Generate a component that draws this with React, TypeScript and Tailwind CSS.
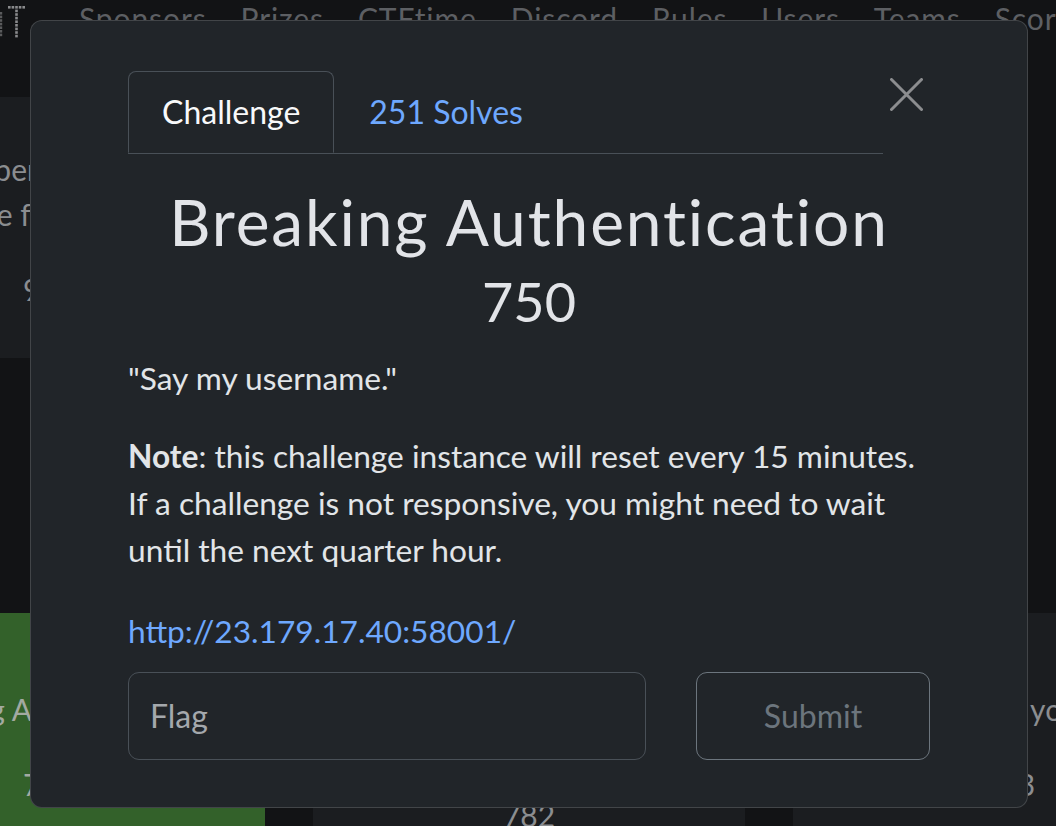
import React from "react";

function Logo() {
  const dots: [number, number][] = [];
  for (let i = 0; i < 5; i++) dots.push([8 + i * 3.6, 6]);
  for (let j = 1; j < 9; j++) dots.push([15.2, 6 + j * 3.6]);
  const left: [number, number][] = [];
  for (let j = 0; j < 7; j++) left.push([0, 12 + j * 3.6]);
  return (
    <svg width="26" height="40" viewBox="0 0 26 40" className="shrink-0">
      {dots.map(([x, y], i) => (
        <rect key={i} x={x} y={y} width="2.6" height="2.6" fill="#8a8b8d" />
      ))}
      {left.map(([x, y], i) => (
        <rect key={"l" + i} x={x} y={y} width="2.2" height="2.6" fill="#5a5b5d" />
      ))}
    </svg>
  );
}

function Card({
  name,
  value,
  className,
}: {
  name: React.ReactNode;
  value: string;
  className: string;
}) {
  return (
    <div className={"flex flex-col items-center text-center text-[30px] leading-[45px] " + className}>
      <div>{name}</div>
      <div className="mt-[30px]">{value}</div>
    </div>
  );
}

export default function App() {
  const nav = ["Sponsors", "Prizes", "CTFtime", "Discord", "Rules", "Users", "Teams", "Scoreboard"];
  return (
    <div className="relative h-[826px] w-[1056px] overflow-hidden bg-[#121315] font-['Lato',sans-serif]">
      {/* page behind the backdrop */}
      <div className="flex h-[97px] items-start">
        <Logo />
        <nav className="ml-[53px] mt-[3px] flex gap-[34px] whitespace-nowrap text-[30px] leading-[30px] tracking-[0.9px] text-[#5d5f63]">
          {nav.map((n) => (
            <span key={n}>{n}</span>
          ))}
        </nav>
      </div>
      <div className="-ml-[167px] grid w-[1392px] grid-cols-[432px_432px_432px] gap-x-[48px]">
        <Card
          className="h-[261px] bg-[#1b1d20] pt-[50px] text-[#8b8d90]"
          name={
            <>
              Paper Pusher
              <br />
              the free flag
            </>
          }
          value="900"
        />
        <Card className="h-[261px] bg-[#1b1d20] pt-[50px] text-[#8b8d90]" name="Hidden" value="500" />
        <div />
        <div className="col-span-3 h-[255px]" />
        <Card
          className="h-[300px] bg-[#33612a] pt-[74px] text-[#a3aaa1]"
          name="Breaking Authentication"
          value="750"
        />
        <Card
          className="h-[300px] bg-[#1b1d20] pt-[60px] text-[#8b8d90]"
          name={
            <>
              Hidden Challenge
              <br />
              Name
            </>
          }
          value="782"
        />
        <Card className="h-[300px] bg-[#1b1d20] pt-[74px] text-[#8b8d90]" name="Who are you?!!" value="443" />
      </div>

      {/* modal */}
      <div className="absolute left-[30px] top-[20px] h-[788px] w-[998px] rounded-[12px] border border-white/15 bg-[#212529] px-[97px] pt-[50px] text-[#e2e5e8]">
        <div className="relative">
          <div className="mr-[47px] flex border-b border-[#495057]">
            <div className="-mb-px flex h-[82px] items-center rounded-t-[8px] border border-[#495057] border-b-[#212529] bg-[#212529] px-[33px] text-[32px] text-[#f8f9fa]">
              Challenge
            </div>
            <div className="flex h-[82px] items-center px-[35px] text-[32px] text-[#6ea8fe]">251 Solves</div>
          </div>
          <button className="absolute right-[7px] top-[7px] h-[33px] w-[33px]" aria-label="Close">
            <svg viewBox="0 0 33 33" width="33" height="33">
              <path d="M1.5 1.5 L31.5 31.5 M31.5 1.5 L1.5 31.5" stroke="#8c8d8f" strokeWidth="3" strokeLinecap="round" />
            </svg>
          </button>
        </div>

        <h2 className="mt-[30px] text-center text-[64px] leading-[76px] tracking-[1.9px] text-[#e2e4e8]">
          Breaking Authentication
        </h2>
        <h3 className="mt-[10px] text-center text-[54px] leading-[64px] text-[#e2e4e8]">750</h3>

        <p className="mt-[21px] text-[31.7px] leading-[47px]">"Say my username."</p>
        <p className="mt-[31px] text-[31.7px] leading-[47px]">
          <strong className="font-bold">Note</strong>: this challenge instance will reset every 15 minutes. If a
          challenge is not responsive, you might need to wait until the next quarter hour.
        </p>
        <p className="mt-[34px] text-[31.7px] leading-[47px]">
          <a className="text-[#6ea8fe]">http://23.179.17.40:58001/</a>
        </p>

        <div className="mt-[17px] flex">
          <div className="flex h-[88px] w-[518px] items-center rounded-[11px] border border-[#495057] px-[21px] text-[32px] text-[#a4a8ac]">
            Flag
          </div>
          <div className="ml-[50px] flex h-[88px] w-[234px] items-center justify-center rounded-[11px] border border-[#6c757d] text-[32px] text-[#6c757d]">
            Submit
          </div>
        </div>
      </div>
    </div>
  );
}
